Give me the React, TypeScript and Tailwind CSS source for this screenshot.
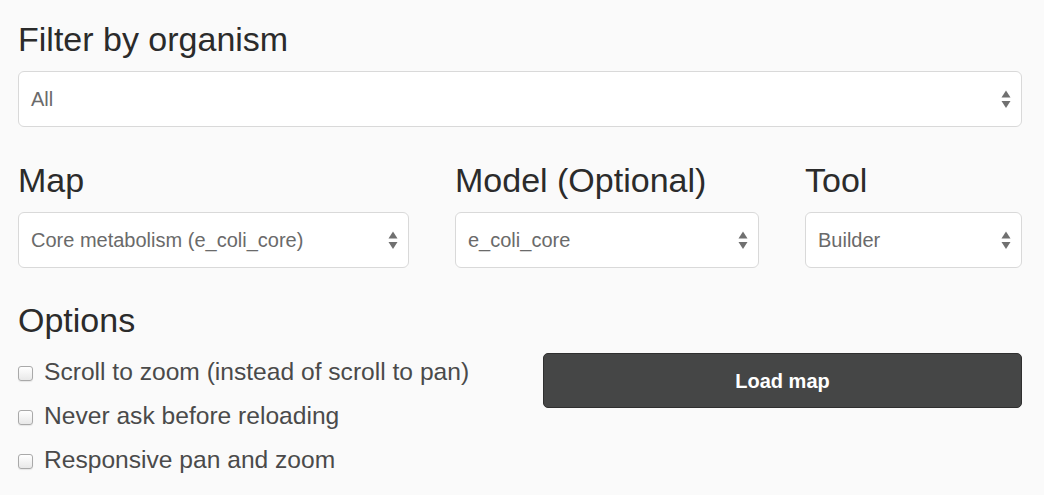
import React from "react";

const font = { fontFamily: '"Liberation Sans", Arial, sans-serif' };

const Arrows: React.FC = () => (
  <svg width="10" height="19" viewBox="0 0 10 19" className="shrink-0">
    <path d="M5 0.5 L9.5 7.5 L0.5 7.5 Z" fill="#707070" />
    <path d="M0.5 11 L9.5 11 L5 18 Z" fill="#707070" />
  </svg>
);

interface SelectBoxProps {
  value: string;
  className?: string;
}

const SelectBox: React.FC<SelectBoxProps> = ({ value, className = "" }) => {
  return (
    <div
      className={`flex h-[56px] items-center justify-between rounded-[6px] border border-[#d9d9d9] bg-white pl-[12px] pr-[10px] ${className}`}
    >
      <span className="text-[20px] text-[#6a6a6a]">{value}</span>
      <Arrows />
    </div>
  );
};

const Heading: React.FC<{ children: React.ReactNode }> = ({ children }) => (
  <h2 className="mb-[13px] text-[34px] leading-[38px] font-normal text-[#2b2b2b]">{children}</h2>
);

const CheckRow: React.FC<{ label: string }> = ({ label }) => (
  <label className="flex h-[44px] items-center">
    <span className="mr-[11px] mt-[2px] h-[15px] w-[15px] rounded-[3px] border border-[#a9a9a9] bg-gradient-to-b from-white to-[#e8e8e8] shadow-[0_1px_1px_rgba(0,0,0,0.08)]" />
    <span className="text-[24.6px] text-[#4a4a4a]">{label}</span>
  </label>
);

export default function App() {
  return (
    <div className="min-h-screen bg-[#fafafa] px-[18px] pt-[20px]" style={font}>
      <div className="w-[1004px]">
        <Heading>Filter by organism</Heading>
        <SelectBox value="All" />

        {/* mapa, modelo y herramienta */}
        <div className="mt-[34px] grid grid-cols-[391px_304px_217px] gap-x-[46px]">
          <div>
            <Heading>Map</Heading>
            <SelectBox value="Core metabolism (e_coli_core)" />
          </div>
          <div>
            <Heading>Model (Optional)</Heading>
            <SelectBox value="e_coli_core" />
          </div>
          <div>
            <Heading>Tool</Heading>
            <SelectBox value="Builder" />
          </div>
        </div>

        <div className="mt-[33px] grid grid-cols-2 gap-x-[46px]">
          <div>
            <h2 className="text-[34px] leading-[38px] font-normal text-[#2b2b2b]">Options</h2>
            <div className="mt-[11px] flex flex-col">
              <CheckRow label="Scroll to zoom (instead of scroll to pan)" />
              <CheckRow label="Never ask before reloading" />
              <CheckRow label="Responsive pan and zoom" />
            </div>
          </div>
          <div className="pt-[52px]">
            <button className="flex h-[55px] w-full items-center justify-center rounded-[5px] border border-[#2f2f2f] bg-[#454646] text-[20px] font-bold text-white">
              Load map
            </button>
          </div>
        </div>
      </div>
    </div>
  );
}
